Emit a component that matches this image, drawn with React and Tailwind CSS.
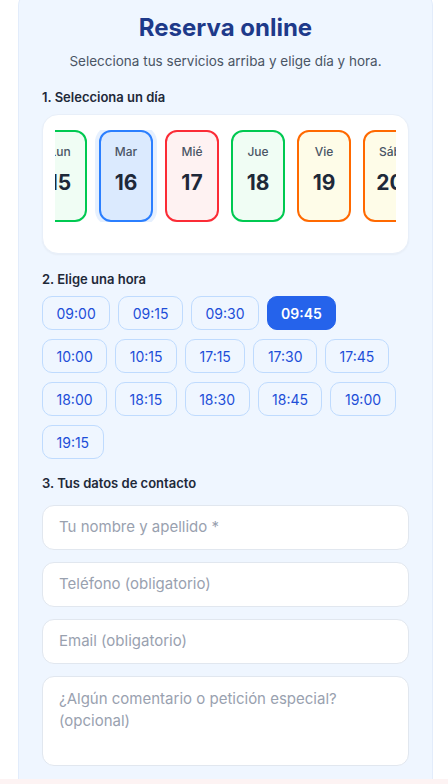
import React from "react";

const days = [
  { d: "Lun", n: "15", c: "border-green-500 bg-green-50" },
  { d: "Mar", n: "16", c: "border-blue-500 bg-blue-100 shadow-[0_0_0_4px_rgba(219,234,254,0.7)]" },
  { d: "Mié", n: "17", c: "border-red-500 bg-red-50" },
  { d: "Jue", n: "18", c: "border-green-500 bg-green-50" },
  { d: "Vie", n: "19", c: "border-orange-500 bg-yellow-50" },
  { d: "Sáb", n: "20", c: "border-orange-500 bg-yellow-50" },
];

const rows = [
  ["09:00", "09:15", "09:30", "09:45"],
  ["10:00", "10:15", "17:15", "17:30", "17:45"],
  ["18:00", "18:15", "18:30", "18:45", "19:00"],
  ["19:15"],
];

export default function App() {
  return (
    <div className="w-[448px] h-[784px] overflow-hidden bg-white flex flex-col" style={{ fontFamily: "Inter, 'Noto Sans', sans-serif" }}>
      <div className="ml-[18px] w-[415px] -mt-[10px] h-[789px] shrink-0 rounded-t-2xl bg-[#eff6ff] border-x border-t border-[#e2ecfb] px-[23px] pt-[21px] flex flex-col">
        <h1 className="text-center text-[24px] leading-8 font-bold text-[#1e3a8a]">Reserva online</h1>
        <p className="mt-[7px] text-center text-[13.5px] leading-5 text-gray-600">Selecciona tus servicios arriba y elige día y hora.</p>

        <div className="mt-4 text-[13px] leading-5 font-semibold text-gray-800">1. Selecciona un día</div>
        <div className="mt-[7px] h-[140px] rounded-2xl bg-white border border-[#e8eff9] shadow-[0_1px_2px_rgba(0,0,0,0.04)] pt-[15px] px-3">
          <div className="overflow-hidden">
            <div className="flex gap-3 -ml-[22px]">
              {days.map((x) => (
                <div key={x.d} className={`w-[54px] h-[92px] shrink-0 rounded-xl border-2 flex flex-col items-center pt-[12px] ${x.c}`}>
                  <span className="text-[12px] leading-4 font-medium text-gray-600">{x.d}</span>
                  <span className="mt-[9px] text-[21px] leading-7 font-bold text-gray-800">{x.n}</span>
                </div>
              ))}
            </div>
          </div>
        </div>

        <div className="mt-[15px] text-[13px] leading-5 font-semibold text-gray-800">2. Elige una hora</div>
        <div className="mt-[7px] flex flex-col gap-y-[9px]">
          {rows.map((r, i) => (
            <div key={i} className="flex gap-x-2">
              {r.map((t) =>
                t === "09:45" ? (
                  <div key={t} className="h-[34px] px-[13px] rounded-[10px] bg-[#2563eb] border border-[#2563eb] text-white text-[14px] font-semibold flex items-center">{t}</div>
                ) : (
                  <div key={t} className="h-[34px] px-[13.5px] rounded-[10px] bg-[#eff6ff] border border-[#bfdbfe] text-[#1d4ed8] text-[14px] flex items-center">{t}</div>
                )
              )}
            </div>
          ))}
        </div>

        <div className="mt-[14px] text-[13px] leading-5 font-semibold text-gray-800">3. Tus datos de contacto</div>
        <div className="mt-3 flex flex-col gap-3">
          <div className="h-[45px] rounded-xl bg-white border border-[#e1e7ef] px-4 flex items-center text-[15px] text-gray-400">Tu nombre y apellido *</div>
          <div className="h-[45px] rounded-xl bg-white border border-[#e1e7ef] px-4 flex items-center text-[15px] text-gray-400">Teléfono (obligatorio)</div>
          <div className="h-[45px] rounded-xl bg-white border border-[#e1e7ef] px-4 flex items-center text-[15px] text-gray-400">Email (obligatorio)</div>
          <div className="h-[90px] rounded-xl bg-white border border-[#e1e7ef] px-4 pt-[11px] text-[15px] leading-[22px] text-gray-400">¿Algún comentario o petición especial? (opcional)</div>
        </div>
      </div>
      <div className="h-[10px] bg-[#fdf3f3] shrink-0" />
    </div>
  );
}
